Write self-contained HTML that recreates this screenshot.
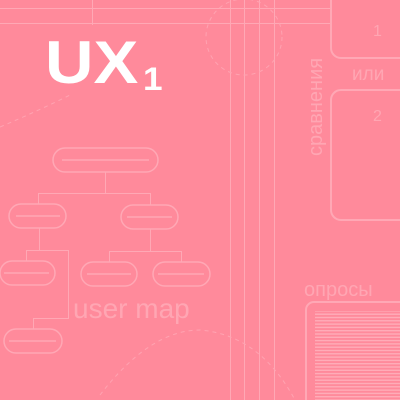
<!DOCTYPE html>
<html><head><meta charset="utf-8"><style>
html,body{margin:0;padding:0}
body{width:400px;height:400px;overflow:hidden;background:#ff8a9b;position:relative;font-family:"Liberation Sans",sans-serif}
svg{position:absolute;left:0;top:0}
</style></head><body>
<svg width="400" height="400" viewBox="0 0 400 400">
<defs><pattern id="st" width="4" height="3.3" patternUnits="userSpaceOnUse"><rect x="0" y="0" width="4" height="1.4" fill="#ffacb8"/></pattern></defs>
<g stroke="#ffa8b5" stroke-width="1" fill="none">
<line x1="0" y1="8.5" x2="330" y2="8.5"/>
<line x1="0" y1="23.5" x2="330" y2="23.5"/>
<line x1="92.5" y1="0" x2="92.5" y2="25"/>
<line x1="230.5" y1="0" x2="230.5" y2="400"/>
<line x1="244.5" y1="0" x2="244.5" y2="400"/>
<line x1="259.5" y1="0" x2="259.5" y2="400"/>
<line x1="274.5" y1="0" x2="274.5" y2="400"/>
</g>
<g stroke="#ffa3b1" stroke-width="1" fill="none" stroke-dasharray="4 4">
<circle cx="244" cy="37" r="38"/>
<path d="M0 127 Q40 110 70 95"/>
<path d="M100 395 Q150 330 200 330 Q260 335 295 400"/>
</g>
<g stroke="#ffa8b5" stroke-width="2" fill="none">
<rect x="331" y="-15" width="80" height="73" rx="10"/>
<rect x="331" y="90" width="80" height="130" rx="10"/>
<rect x="306" y="302" width="110" height="110" rx="8"/>
</g>
<rect x="315" y="311" width="90" height="90" fill="url(#st)"/>
<g stroke="#ffa8b5" stroke-width="1.5" fill="none">
<rect x="53" y="148" width="105" height="24" rx="12"/>
<line x1="62" y1="160" x2="149" y2="160"/>
<rect x="9" y="204" width="57" height="24" rx="12"/>
<line x1="16" y1="216" x2="60" y2="216"/>
<rect x="121" y="205" width="57" height="24" rx="12"/>
<line x1="127" y1="217" x2="172" y2="217"/>
<rect x="0" y="261" width="55" height="24" rx="12"/>
<line x1="4" y1="273" x2="49" y2="273"/>
<rect x="81" y="262" width="56" height="24" rx="12"/>
<line x1="87" y1="274" x2="131" y2="274"/>
<rect x="153" y="262" width="57" height="24" rx="12"/>
<line x1="158" y1="274" x2="204" y2="274"/>
<rect x="4" y="329" width="58" height="24" rx="12"/>
<line x1="9" y1="341" x2="56" y2="341"/>
</g>
<g stroke="#ffa8b5" stroke-width="1" fill="none">
<path d="M105.5 172 V193.5 M38.5 204 V193.5 H150.5 V205"/>
<path d="M39.5 228 V250.5 M26.5 261 V250.5 H68.5 V318.5 H33.5 V329"/>
<path d="M150.5 229 V251.5 M109.5 262 V251.5 H181.5 V262"/>
</g>
<text transform="translate(45,83) scale(1.12,1)" font-family="Liberation Sans,sans-serif" font-weight="bold" font-size="60" fill="#fff">UX</text>
<text transform="translate(143,90) scale(1.1,1)" font-family="Liberation Sans,sans-serif" font-weight="bold" font-size="32" fill="#fff">1</text>
<g fill="#ffa6b3" font-family="Liberation Sans,sans-serif">
<text x="373" y="36" font-size="16">1</text>
<text x="373" y="121" font-size="16">2</text>
<text x="352" y="80" font-size="19">или</text>
<text x="304" y="296" font-size="20">опросы</text>
<text x="73" y="318" font-size="28">user map</text>
<text transform="translate(322,156) rotate(-90)" font-size="20">сравнения</text>
</g>
</svg>
</body></html>
